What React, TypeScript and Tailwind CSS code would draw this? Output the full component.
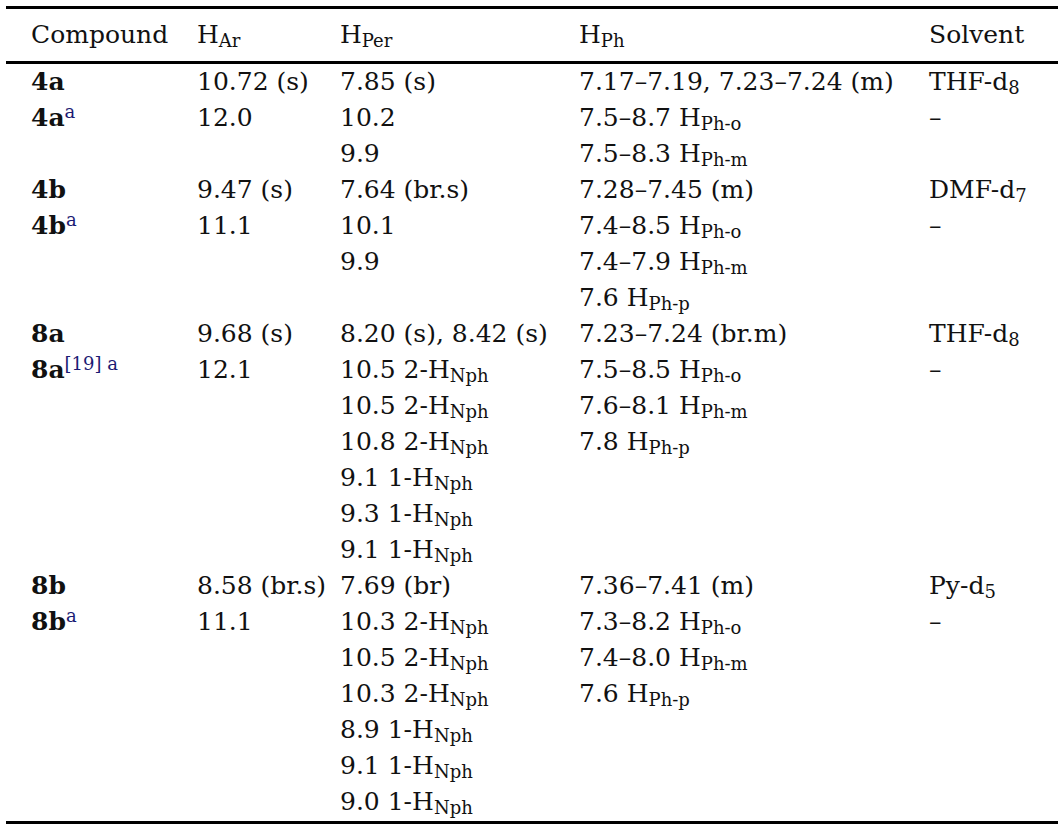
import React from "react";

const Sub = ({ children }: { children: React.ReactNode }) => (
  <span className="text-[18px] leading-none align-[-4px]">{children}</span>
);
const Sup = ({ children }: { children: React.ReactNode }) => (
  <span className="text-[18px] leading-none align-[8px] font-normal text-[#1b1a73]">{children}</span>
);
const B = ({ children }: { children: React.ReactNode }) => <span className="font-bold">{children}</span>;

type Row = [React.ReactNode, React.ReactNode, React.ReactNode, React.ReactNode, React.ReactNode];

const Hn = () => (
  <>
    H<Sub>Nph</Sub>
  </>
);

const rows: Row[] = [
  [<B>4a</B>, "10.72 (s)", "7.85 (s)", "7.17–7.19, 7.23–7.24 (m)", <>THF-d<Sub>8</Sub></>],
  [<><B>4a</B><Sup>a</Sup></>, "12.0", "10.2", <>7.5–8.7 H<Sub>Ph-o</Sub></>, "–"],
  ["", "", "9.9", <>7.5–8.3 H<Sub>Ph-m</Sub></>, ""],
  [<B>4b</B>, "9.47 (s)", "7.64 (br.s)", "7.28–7.45 (m)", <>DMF-d<Sub>7</Sub></>],
  [<><B>4b</B><Sup>a</Sup></>, "11.1", "10.1", <>7.4–8.5 H<Sub>Ph-o</Sub></>, "–"],
  ["", "", "9.9", <>7.4–7.9 H<Sub>Ph-m</Sub></>, ""],
  ["", "", "", <>7.6 H<Sub>Ph-p</Sub></>, ""],
  [<B>8a</B>, "9.68 (s)", "8.20 (s), 8.42 (s)", "7.23–7.24 (br.m)", <>THF-d<Sub>8</Sub></>],
  [<><B>8a</B><Sup>[19] a</Sup></>, "12.1", <>10.5 2-<Hn /></>, <>7.5–8.5 H<Sub>Ph-o</Sub></>, "–"],
  ["", "", <>10.5 2-<Hn /></>, <>7.6–8.1 H<Sub>Ph-m</Sub></>, ""],
  ["", "", <>10.8 2-<Hn /></>, <>7.8 H<Sub>Ph-p</Sub></>, ""],
  ["", "", <>9.1 1-<Hn /></>, "", ""],
  ["", "", <>9.3 1-<Hn /></>, "", ""],
  ["", "", <>9.1 1-<Hn /></>, "", ""],
  [<B>8b</B>, "8.58 (br.s)", "7.69 (br)", "7.36–7.41 (m)", <>Py-d<Sub>5</Sub></>],
  [<><B>8b</B><Sup>a</Sup></>, "11.1", <>10.3 2-<Hn /></>, <>7.3–8.2 H<Sub>Ph-o</Sub></>, "–"],
  ["", "", <>10.5 2-<Hn /></>, <>7.4–8.0 H<Sub>Ph-m</Sub></>, ""],
  ["", "", <>10.3 2-<Hn /></>, <>7.6 H<Sub>Ph-p</Sub></>, ""],
  ["", "", <>8.9 1-<Hn /></>, "", ""],
  ["", "", <>9.1 1-<Hn /></>, "", ""],
  ["", "", <>9.0 1-<Hn /></>, "", ""],
];

const cols = "grid grid-cols-[166px_143px_239px_350px_1fr] pl-[25px]";

export default function App() {
  return (
    <div className="bg-white w-[1060px] h-[839px] overflow-hidden text-[#111] text-[25px] font-['DejaVu_Serif',serif]">
      <div className="ml-[6px] w-[1052px] mt-[6px]">
        <div className="h-[3px] bg-black" />
        <div className={`${cols} h-[52px] items-center whitespace-nowrap`}>
          <div>Compound</div>
          <div>
            H<Sub>Ar</Sub>
          </div>
          <div>
            H<Sub>Per</Sub>
          </div>
          <div>
            H<Sub>Ph</Sub>
          </div>
          <div>Solvent</div>
        </div>
        <div className="h-[3px] bg-black" />
        <div>
          {rows.map((r, i) => (
            <div key={i} className={`${cols} h-[36px] leading-[36px] whitespace-nowrap`}>
              {r.map((c, j) => (
                <div key={j}>{c}</div>
              ))}
            </div>
          ))}
        </div>
        <div className="h-[3px] bg-black mt-[1px]" />
        <div className="pl-[28px] pt-[11px] text-[18px] leading-[20px] text-[#1b1a73]">a</div>
      </div>
    </div>
  );
}
